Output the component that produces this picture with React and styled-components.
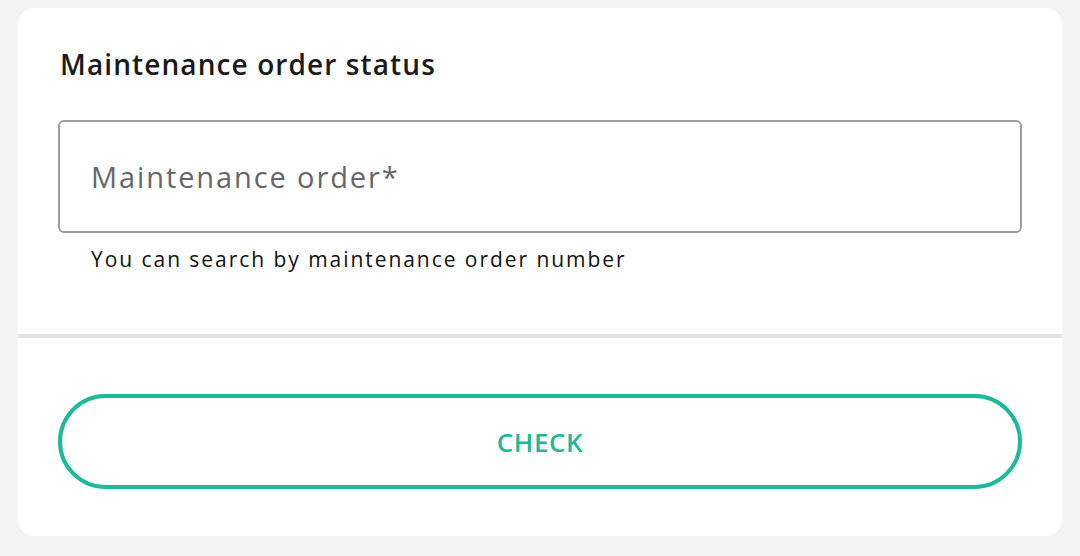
import React from 'react'
import styled, { createGlobalStyle } from 'styled-components'

const GlobalStyle = createGlobalStyle`
    html, body {
        margin: 0;
        padding: 0;
        background: #f4f4f4;
        font-family: "Open Sans", "Noto Sans", sans-serif;
    }
`

const App = () => (
    <Page>
        <GlobalStyle />
        <Card>
            <CardBody>
                <Title>Maintenance order status</Title>
                <Field>
                    <Input placeholder="Maintenance order*" />
                </Field>
                <Helper>You can search by maintenance order number</Helper>
            </CardBody>
            <CardFooter>
                <CheckButton>CHECK</CheckButton>
            </CardFooter>
        </Card>
    </Page>
)

const Page = styled.div`
    padding: 8px 18px 20px;
    box-sizing: border-box;
    height: 556px;
`

const Card = styled.div`
    background: #fff;
    border-radius: 16px;
    height: 528px;
    display: flex;
    flex-direction: column;
`

const CardBody = styled.div`
    padding: 40px 40px 60px;
    border-bottom: 4px solid #e5e5e5;
`

const Title = styled.h2`
    margin: 0 0 40px 2px;
    font-size: 28px;
    line-height: 32px;
    font-weight: 600;
    letter-spacing: 1.1px;
    color: #1a1a1a;
`

const Field = styled.div`
    display: flex;
`

const Input = styled.input`
    flex: 1;
    height: 113px;
    box-sizing: border-box;
    border: 2px solid #9e9e9e;
    border-radius: 6px;
    padding: 0 31px;
    font-family: inherit;
    font-size: 29px;
    letter-spacing: 1.9px;
    color: #222;
    outline: none;

    &::placeholder {
        color: #666;
    }
`

const Helper = styled.p`
    margin: 11px 0 0;
    padding-left: 33px;
    font-size: 21px;
    line-height: 30px;
    letter-spacing: 1.95px;
    color: #111;
`

const CardFooter = styled.div`
    padding: 56px 40px 47px;
`

const CheckButton = styled.button`
    width: 100%;
    height: 95px;
    background: #fff;
    border: 4px solid #1bba98;
    border-radius: 48px;
    color: #1bba98;
    font-family: inherit;
    font-size: 26px;
    font-weight: 600;
    letter-spacing: 0.6px;
    cursor: pointer;
`

export default App
